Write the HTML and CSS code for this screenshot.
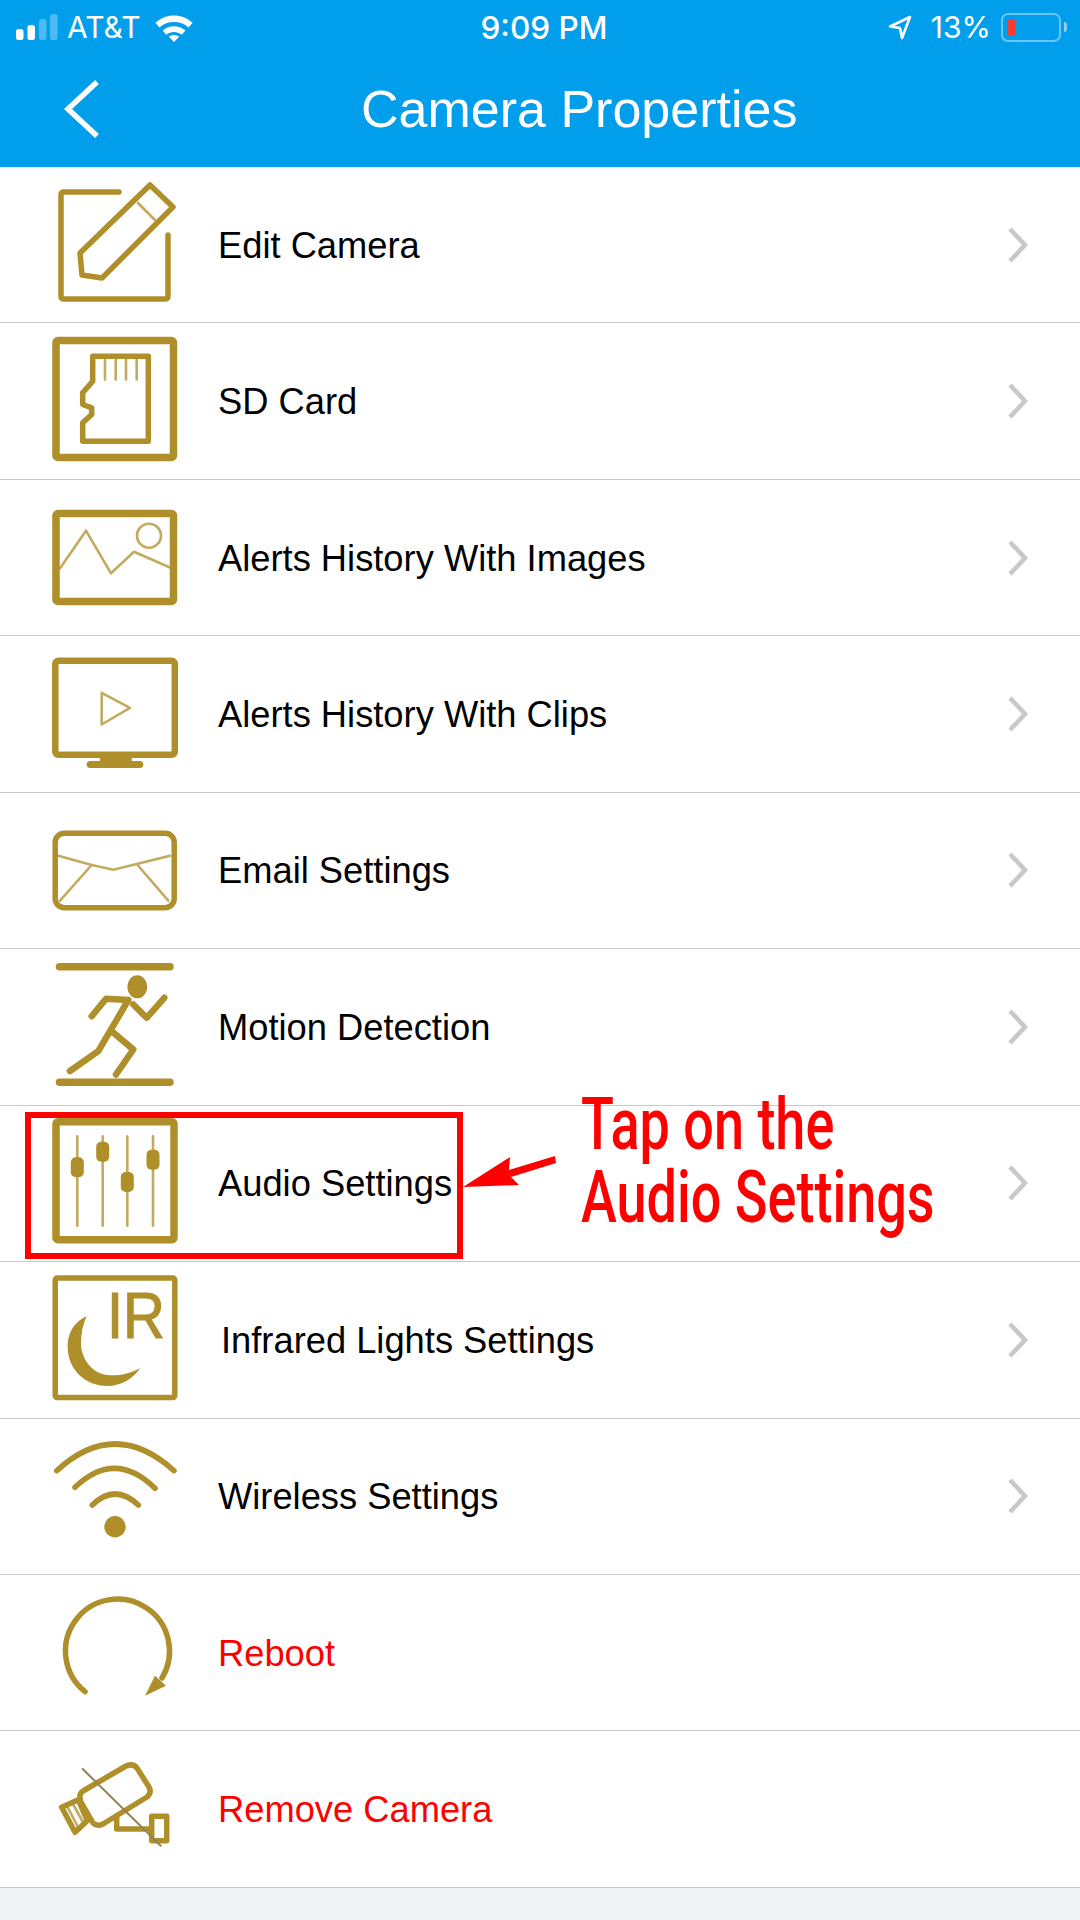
FILE: index.html
```html
<!DOCTYPE html>
<html lang="en">
<head>
<meta charset="UTF-8" />
<meta name="viewport" content="width=device-width, initial-scale=1" />
<title>Camera Properties</title>
<link rel="stylesheet" href="styles.css">
</head>
<body>

<header class="app-header">
  <div class="status-bar">
    <div class="status-left">
      <svg class="signal" width="44" height="28" viewBox="0 0 44 28">
        <rect x="0" y="16" width="7.500" height="11" rx="2.500" fill="#fff"/>
        <rect x="11.500" y="12" width="7.500" height="15" rx="2.500" fill="#fff"/>
        <rect x="23" y="6" width="7.500" height="21" rx="2.500" fill="#fff" opacity=".3"/>
        <rect x="34" y="1" width="7.500" height="26" rx="2.500" fill="#fff" opacity=".3"/>
      </svg>
      <span class="carrier">AT&amp;T</span>
      <svg class="wifi" width="40" height="29" viewBox="0 0 38 28">
        <path d="M1 9.500C11 0 27 0 37 9.500L33 14C25.500 7 12.500 7 5 14Z" fill="#fff"/>
        <path d="M8 17C14 11.500 24 11.500 30 17L26.500 21C22 17.500 16 17.500 11.500 21Z" fill="#fff"/>
        <path d="M14 23C17 20.700 21 20.700 24 23L19 28Z" fill="#fff"/>
      </svg>
    </div>
    <div class="status-time">9:09 PM</div>
    <div class="status-right">
      <svg class="location" width="24" height="25" viewBox="0 0 24 25">
        <path d="M2 11.500L22 2L14 23L12 13Z" fill="none" stroke="#fff" stroke-width="2.600" stroke-linejoin="round"/>
      </svg>
      <span class="battery-pct">13%</span>
      <div class="battery"><div class="battery-level"></div></div>
      <div class="battery-nub"></div>
    </div>
  </div>
  <div class="nav-bar">
    <svg class="back" width="38" height="60" viewBox="0 0 38 60">
      <path d="M35 3L6 30L35 57" fill="none" stroke="#fff" stroke-width="5.500"/>
    </svg>
    <h1>Camera Properties</h1>
  </div>
</header>

<main class="menu">

  <div class="menu-row">
    <svg class="icon" viewBox="0 0 130 130">
      <path d="M69 12H14Q11 12 11 15V116Q11 119 14 119H115Q118 119 118 116V55" class="line"/>
      <path d="M30 73L100 5L123 27L52 98L32 95Z" class="line"/>
      <path d="M88 23L105 40" class="thin"/>
    </svg>
    <span class="label">Edit Camera</span>
    <svg class="chevron" width="20" height="36" viewBox="0 0 20 36"><path d="M2 2L17 18L2 34"/></svg>
  </div>

  <div class="menu-row">
    <svg class="icon" viewBox="0 0 130 130">
      <rect x="6" y="4.500" width="117.500" height="117" rx="2" class="frame"/>
      <path d="M42.700 20.200H98.300V105.200H32.700V86.800L41.700 78.500V71.800L32.700 68.500V56.800L42.700 45.200Z" class="line"/>
      <path d="M55 23V43.500M65.700 23V43.500M76 23V43.500M86.700 23V43.500" class="thin"/>
    </svg>
    <span class="label">SD Card</span>
    <svg class="chevron" width="20" height="36" viewBox="0 0 20 36"><path d="M2 2L17 18L2 34"/></svg>
  </div>

  <div class="menu-row">
    <svg class="icon" viewBox="0 0 130 130">
      <rect x="6" y="20.500" width="117.500" height="88" rx="2" class="frame"/>
      <path d="M10 75.300L36 37.700L61 80.300L84 58.700L121.700 75.300" class="thin"/>
      <circle cx="99" cy="42.700" r="12" class="thin"/>
    </svg>
    <span class="label">Alerts History With Images</span>
    <svg class="chevron" width="20" height="36" viewBox="0 0 20 36"><path d="M2 2L17 18L2 34"/></svg>
  </div>

  <div class="menu-row">
    <svg class="icon" viewBox="0 0 130 130">
      <rect x="5.300" y="11.800" width="119.500" height="94" rx="3" class="frame frame-mid"/>
      <rect x="50" y="106" width="31.700" height="8" class="solid"/>
      <rect x="36.700" y="112" width="56.600" height="7" rx="3.500" class="solid"/>
      <path d="M51.700 43.800L80 58.800L51.700 75.500Z" class="thin"/>
    </svg>
    <span class="label">Alerts History With Clips</span>
    <svg class="chevron" width="20" height="36" viewBox="0 0 20 36"><path d="M2 2L17 18L2 34"/></svg>
  </div>

  <div class="menu-row">
    <svg class="icon" viewBox="0 0 130 130">
      <rect x="5.200" y="28.200" width="119" height="74.500" rx="9" class="line"/>
      <path d="M8.300 50.700L41.700 60L63.300 64.700L86.700 59L120 50.700M41.700 60L10 95.700M86.700 59L118.300 95.700" class="thin"/>
    </svg>
    <span class="label">Email Settings</span>
    <svg class="chevron" width="20" height="36" viewBox="0 0 20 36"><path d="M2 2L17 18L2 34"/></svg>
  </div>

  <div class="menu-row">
    <svg class="icon" viewBox="0 0 130 130">
      <path d="M9.500 4.800H120M9.500 120.200H120" class="bold"/>
      <ellipse cx="87.300" cy="24.800" rx="10" ry="11.500" class="solid"/>
      <path d="M78.300 38L48.300 89.200L20 109M61.700 69.200L83.300 87.500L66 112.500M78.300 38L56 36.800L41.700 54.200M83.300 42.500L96.700 55.800L114.300 35.800" class="limb"/>
    </svg>
    <span class="label">Motion Detection</span>
    <svg class="chevron" width="20" height="36" viewBox="0 0 20 36"><path d="M2 2L17 18L2 34"/></svg>
  </div>

  <div class="menu-row">
    <svg class="icon" viewBox="0 0 130 130">
      <rect x="6" y="3.800" width="118" height="118" rx="2" class="frame"/>
      <path d="M27.300 18.300V107.700M52.700 18.300V107.700M77.300 18.300V107.700M103 18.300V107.700" class="thin"/>
      <rect x="20.800" y="39.300" width="13" height="20" rx="5" class="solid"/>
      <rect x="46.200" y="23.700" width="13" height="20" rx="5" class="solid"/>
      <rect x="70.800" y="54" width="13" height="20" rx="5" class="solid"/>
      <rect x="96.500" y="31.700" width="13" height="20" rx="5" class="solid"/>
    </svg>
    <span class="label">Audio Settings</span>
    <svg class="chevron" width="20" height="36" viewBox="0 0 20 36"><path d="M2 2L17 18L2 34"/></svg>
  </div>

  <div class="menu-row">
    <svg class="icon" viewBox="0 0 130 130">
      <rect x="5.200" y="3" width="119.600" height="119.600" rx="2" class="line"/>
      <text x="57" y="63" class="ir-text" textLength="58" lengthAdjust="spacingAndGlyphs">IR</text>
      <path d="M36.700 41.200C22 48 17.700 60 17.700 72C17.700 95 36 111 57 111C72 111 84 103 90 93C78 100 66 101 57 100C42 98 31 84 31 68C31 58 33 49 36.700 41.200Z" class="solid"/>
    </svg>
    <span class="label label-ir">Infrared Lights Settings</span>
    <svg class="chevron" width="20" height="36" viewBox="0 0 20 36"><path d="M2 2L17 18L2 34"/></svg>
  </div>

  <div class="menu-row">
    <svg class="icon" viewBox="0 0 130 130">
      <path d="M6.700 39.700Q65 -13.700 124 39.700M25 56.300Q65 18 105 57.300M42.300 74Q65 52 88.300 74" class="line"/>
      <circle cx="65" cy="95.700" r="10.700" class="solid"/>
    </svg>
    <span class="label">Wireless Settings</span>
    <svg class="chevron" width="20" height="36" viewBox="0 0 20 36"><path d="M2 2L17 18L2 34"/></svg>
  </div>

  <div class="menu-row">
    <svg class="icon" viewBox="0 0 130 130">
      <path d="M35 103.700A52 52 0 1 1 112 90" class="line"/>
      <path d="M95 107.700L105 87.700L116 97.700Z" class="solid"/>
    </svg>
    <span class="label label-danger">Reboot</span>
  </div>

  <div class="menu-row">
    <svg class="icon" viewBox="0 0 130 130">
      <path d="M33 47L76 22Q83 19 87 24L99 43Q102 49 97 53L53 80Q47 83 43 79L31 58Q28 50 33 47Z" class="line"/>
      <path d="M11.700 63.300L28.300 55.700L37.300 76.700L25 88.300Z" class="line"/>
      <path d="M17 62L29 85M23 60L34 80" class="thin"/>
      <path d="M66.700 71.700V85H101.700M101.700 72.300H116.700V96.700H101.700Z" class="line"/>
      <path d="M32.700 25L110.700 101.700" class="slash"/>
    </svg>
    <span class="label label-danger">Remove Camera</span>
  </div>

</main>

<!-- Annotation drawn over the screenshot -->
<div class="callout-box"></div>
<svg class="callout-arrow" width="100" height="36" viewBox="0 0 100 36">
  <path d="M1 33L48 3L47 16L93 2L94 9L49 23L57 31Z" fill="#fe0000"/>
</svg>
<div class="callout-text">Tap on the<br>Audio Settings</div>

</body>
</html>
```

FILE: styles.css
```css
body {
  margin: 0;
  height: 1920px;
  position: relative;
  overflow: hidden;
  background: #f2f3f5;
  font-family: "Liberation Sans", Arial, sans-serif;
}

/* Header */
.app-header {
  height: 167px;
  background: #019eec;
  color: white;
}
.status-bar {
  display: grid;
  grid-template-columns: 1fr auto 1fr;
  align-items: center;
  height: 54px;
  font-family: Inter, "Liberation Sans", sans-serif;
  font-size: 30px;
}
.status-left {
  display: flex;
  align-items: center;
  padding-left: 16px;
}
.carrier {
  margin-left: 7px;
}
.wifi {
  margin-left: 13px;
}
.status-time {
  margin-left: 8px;
  font-size: 31.500px;
  font-weight: 500;
}
.status-right {
  display: flex;
  align-items: center;
  justify-content: flex-end;
  padding-right: 13px;
}
.battery-pct {
  margin-left: 19px;
}
.battery {
  width: 60px;
  height: 29px;
  box-sizing: border-box;
  margin-left: 10px;
  padding: 4px;
  border: 2px solid #6cc4f5;
  border-radius: 7px;
}
.battery-level {
  width: 8px;
  height: 100%;
  background: #ff3b30;
  border-radius: 2px;
}
.battery-nub {
  width: 3px;
  height: 10px;
  margin-left: 3px;
  background: #8dd0f6;
  border-radius: 0 3px 3px 0;
}
.nav-bar {
  display: flex;
  align-items: center;
  height: 110px;
  padding-left: 62px;
}
.nav-bar h1 {
  margin: 0 0 0 261px;
  font-size: 52px;
  font-weight: normal;
}

/* Menu */
.menu {
  background: white;
}
.menu-row {
  display: flex;
  align-items: center;
  height: 156.450px;
  box-sizing: border-box;
  padding-left: 50px;
  border-bottom: 1px solid #c8c8c8;
}
.label {
  flex: 1;
  margin-left: 38px;
  padding-top: 2px;
  font-size: 36.300px;
  color: #000;
}
.label-ir {
  margin-left: 41px;
}
.label-danger {
  color: #fe0000;
}
.chevron {
  margin-right: 52px;
}
.chevron path {
  fill: none;
  stroke: #c7c7cc;
  stroke-width: 4.500;
}

/* Gold icons */
.icon {
  width: 130px;
  height: 130px;
  flex-shrink: 0;
}
.line, .frame, .thin, .bold, .limb, .slash {
  fill: none;
  stroke: #ae8f2a;
  stroke-linecap: round;
  stroke-linejoin: round;
}
.line {
  stroke-width: 5.500;
}
.frame {
  stroke-width: 7.500;
}
.frame-mid {
  stroke-width: 6.500;
}
.thin {
  stroke-width: 2.600;
  opacity: 0.75;
}
.bold {
  stroke-width: 7.500;
}
.limb {
  stroke-width: 6.500;
}
.slash {
  stroke: #93834e;
  stroke-width: 2;
}
.solid {
  fill: #ae8f2a;
}
.ir-text {
  font-family: "Liberation Sans", Arial, sans-serif;
  font-size: 65px;
  fill: #ae8f2a;
  stroke: #ae8f2a;
  stroke-width: 1.200;
}

/* Annotation over the screenshot */
.callout-box {
  position: absolute;
  left: 25px;
  top: 1112px;
  width: 438px;
  height: 147px;
  box-sizing: border-box;
  border: 6px solid #fe0000;
}
.callout-arrow {
  position: absolute;
  left: 462px;
  top: 1154px;
}
.callout-text {
  position: absolute;
  left: 581px;
  top: 1088px;
  font-family: Roboto, "Liberation Sans", sans-serif;
  font-size: 72px;
  font-weight: 500;
  line-height: 73px;
  white-space: nowrap;
  color: #fe0000;
  transform: scaleX(0.75);
  transform-origin: left top;
}
```
